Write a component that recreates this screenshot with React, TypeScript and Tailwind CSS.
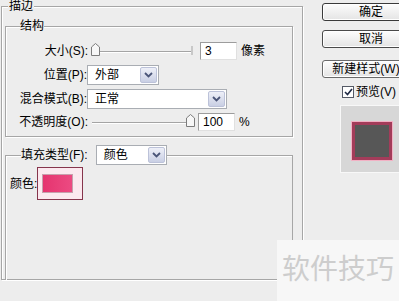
import React from "react";

function Dropdown({ w, text }: { w: string; text: string }) {
  return (
    <div className={`flex h-[20px] ${w} items-stretch border border-[#a9adb3] bg-white`}>
      <span className="flex flex-1 items-center pl-[7px] leading-[14px]">{text}</span>
      <span className="m-[1px] flex w-[17px] items-center justify-center rounded-[2px] border border-[#bcc2d9] bg-gradient-to-b from-[#eef0f8] to-[#c9cfe4]">
        <svg width="9" height="6" viewBox="0 0 9 6">
          <path d="M1 1 L4.5 4.5 L8 1" fill="none" stroke="#4a5578" strokeWidth="1.8" />
        </svg>
      </span>
    </div>
  );
}

function TextInput({ text }: { text: string }) {
  return (
    <div className="flex h-[18px] w-[37px] items-center border border-[#9c9c9c] border-b-[#e0e0e0] border-r-[#e0e0e0] bg-white pl-[4px] leading-[14px]">
      {text}
    </div>
  );
}

function Slider({ thumb }: { thumb: string }) {
  return (
    <div className="relative h-[18px] w-[106px]">
      <div className="absolute left-[4px] right-[2px] top-[9px] h-[2px] border-t border-[#a4a4a4] bg-white" />
      <div className="absolute right-[1px] top-[4px] h-[9px] w-[2px] bg-[#c8c8c8]" />
      <svg className={`absolute top-[1px] ${thumb}`} width="9" height="13" viewBox="0 0 9 13">
        <polygon points="0.5,4 4.5,0.5 8.5,4 8.5,12.5 0.5,12.5" fill="#f7f7f7" stroke="#7c7c7c" />
      </svg>
    </div>
  );
}

function Btn({ text, cls }: { text: string; cls: string }) {
  return (
    <div
      className={`flex h-[18px] w-[98px] items-center justify-center rounded-[3px] border bg-gradient-to-b from-[#fdfdfd] to-[#e4e4e4] leading-[14px] shadow-[inset_0_0_0_1px_#ffffff] ${cls}`}
    >
      {text}
    </div>
  );
}

export default function App() {
  return (
    <div className="relative flex h-[301px] w-[399px] overflow-hidden bg-[#ededed] text-[12px] text-black font-['Liberation_Sans','Noto_Sans_CJK_SC',sans-serif]">
      {/* Left: 描边 */}
      <fieldset className="ml-[1px] h-[280px] w-[302px] shrink-0 border border-[#a6a6a6] shadow-[inset_1px_1px_0_#ffffff,1px_1px_0_#ffffff]">
        <legend className="ml-[6px] bg-[#ededed] px-[1px] leading-[13px]">描边</legend>

        {/* 结构 */}
        <fieldset className="ml-[3px] mt-[7px] w-[288px] border border-[#a6a6a6] pb-[5px] shadow-[inset_1px_1px_0_#ffffff,1px_1px_0_#ffffff]">
          <legend className="ml-[14px] bg-[#ededed] leading-[13px]">结构</legend>

          <div className="mt-[9px] flex h-[18px] items-center">
            <span className="w-[82px] text-right leading-[14px]">大小(S):</span>
            <Slider thumb="left-[3px]" />
            <div className="ml-[6px]">
              <TextInput text="3" />
            </div>
            <span className="ml-[4px] leading-[14px]">像素</span>
          </div>

          <div className="mt-[5px] flex h-[20px] items-center">
            <span className="w-[81px] text-right leading-[14px]">位置(P):</span>
            <Dropdown w="w-[72px]" text="外部" />
          </div>

          <div className="mt-[4px] flex h-[20px] items-center">
            <span className="w-[81px] text-right leading-[14px]">混合模式(B):</span>
            <Dropdown w="w-[140px]" text="正常" />
          </div>

          <div className="mt-[4px] flex h-[18px] items-center">
            <span className="w-[82px] text-right leading-[14px]">不透明度(O):</span>
            <Slider thumb="left-[98px]" />
            <div className="ml-[4px]">
              <TextInput text="100" />
            </div>
            <span className="ml-[4px] leading-[14px]">%</span>
          </div>
        </fieldset>

        {/* 填充类型 */}
        <fieldset className="ml-[3px] mt-[9px] h-[134px] w-[288px] border border-b-0 border-[#a6a6a6] shadow-[inset_1px_1px_0_#ffffff]">
          <legend className="ml-[15px] flex h-[18px] items-center gap-[8px] bg-[#ededed]">
            <span className="leading-[14px]">填充类型(F):</span>
            <Dropdown w="w-[71px]" text="颜色" />
          </legend>

          <div className="ml-[4px] mt-[3px] flex items-center">
            <span className="leading-[14px]">颜色:</span>
            <div className="flex h-[33px] w-[46px] items-center border border-[#86354c] bg-[#fbe9ef] pl-[4px]">
              <div className="h-[19px] w-[31px] border border-[#c7a0ad] bg-gradient-to-r from-[#e5336f] to-[#ec4a82]" />
            </div>
          </div>
        </fieldset>
      </fieldset>

      {/* Right column */}
      <div className="ml-[19px] flex w-[98px] shrink-0 flex-col">
        <div className="mt-[3px]">
          <Btn text="确定" cls="border-[#3a3a3a]" />
        </div>
        <div className="mt-[9px]">
          <Btn text="取消" cls="border-[#4a4a4a]" />
        </div>
        <div className="mt-[12px]">
          <Btn text="新建样式(W)..." cls="border-[#6a6a6a]" />
        </div>
        <div className="ml-[20px] mt-[7px] flex items-center gap-[2px]">
          <span className="flex h-[12px] w-[12px] items-center justify-center border border-[#555a66] bg-white">
            <svg width="9" height="8" viewBox="0 0 9 8">
              <path d="M1 4 L3.5 6.5 L8 1" fill="none" stroke="#1f2a44" strokeWidth="1.6" />
            </svg>
          </span>
          <span className="leading-[14px]">预览(V)</span>
        </div>
        <div className="ml-[18px] mt-[6px] h-[68px] w-[70px] border border-[#f8f8f8] bg-[#d7d7d7] pl-[11px] pt-[16px]">
          <div className="h-[38px] w-[40px] border-[3px] border-[#a33c5a] bg-[#575757] shadow-[0_0_0_1px_#f2b1c4]" />
        </div>
      </div>

      {/* Watermark */}
      <div className="absolute left-[277px] top-[240px] h-[61px] w-[122px] bg-[#f7f7f7] pl-[5px] pt-[15px] text-[28px] leading-[30px] text-[#cdcdcd]">
        软件技巧
      </div>
    </div>
  );
}
